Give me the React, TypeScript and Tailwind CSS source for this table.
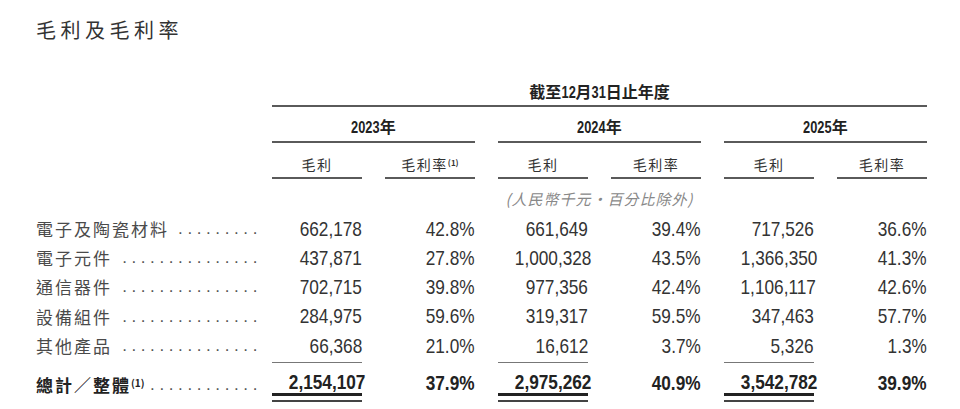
const NUM_FONT = "font-['Liberation_Sans','Noto_Sans_CJK_TC',sans-serif]"

const rows = [
  { label: '電子及陶瓷材料', dots: 9, values: ['662,178', '42.8%', '661,649', '39.4%', '717,526', '36.6%'] },
  { label: '電子元件', dots: 15, values: ['437,871', '27.8%', '1,000,328', '43.5%', '1,366,350', '41.3%'] },
  { label: '通信器件', dots: 15, values: ['702,715', '39.8%', '977,356', '42.4%', '1,106,117', '42.6%'] },
  { label: '設備組件', dots: 15, values: ['284,975', '59.6%', '319,317', '59.5%', '347,463', '57.7%'] },
  { label: '其他產品', dots: 15, values: ['66,368', '21.0%', '16,612', '3.7%', '5,326', '1.3%'] },
]

const total = ['2,154,107', '37.9%', '2,975,262', '40.9%', '3,542,782', '39.9%']

// Arial Narrow look: Liberation Sans squeezed horizontally
function Narrow({ children }: { children: React.ReactNode }) {
  return <span className="inline-block origin-right scale-x-[0.82] whitespace-nowrap">{children}</span>
}

function Dots({ count }: { count: number }) {
  return (
    <span className="whitespace-nowrap text-[17px] tracking-[4.6px] text-[#555] font-['Liberation_Sans',sans-serif]">
      {'.'.repeat(count)}
    </span>
  )
}

function Label({ children, dots, bold }: { children: React.ReactNode; dots: number; bold?: boolean }) {
  return (
    <div className="w-[236px] pr-[10px] flex items-center justify-between">
      <span
        className={`whitespace-nowrap text-[17px] tracking-[2px] font-['Noto_Sans_CJK_TC',sans-serif] ${
          bold ? 'font-bold text-[#222]' : 'text-[#4a4a4a]'
        }`}
      >
        {children}
      </span>
      <Dots count={dots} />
    </div>
  )
}

function Groups({ render }: { render: (i: number) => React.ReactNode }) {
  return (
    <div className="flex gap-[23px]">
      {[0, 1, 2].map((i) => (
        <div key={i} className="w-[203px] flex gap-[23px]">
          {render(i)}
        </div>
      ))}
    </div>
  )
}

export default function App() {
  return (
    <div className="w-[960px] h-[409px] bg-white pl-[36px] pt-[16px] overflow-hidden">
      {/* Title */}
      <h1 className="h-[28px] leading-[28px] text-[20px] tracking-[4.5px] text-[#333] font-['Noto_Sans_CJK_TC',sans-serif]">
        毛利及毛利率
      </h1>

      {/* Period header */}
      <div className="mt-[37px] ml-[236px] w-[655px] h-[26px] border-b-2 border-[#5a5a5a] text-center leading-[24px] text-[16px] font-bold text-[#222] font-['Liberation_Sans','Noto_Sans_CJK_TC',sans-serif]">
        截至
        <span className="inline-block origin-right scale-x-[0.8] -ml-[3.5px]">12</span>月
        <span className="inline-block origin-right scale-x-[0.8] -ml-[3.5px]">31</span>日止年度
      </div>

      {/* Years */}
      <div className="ml-[236px]">
        <Groups
          render={(i) => (
            <div className="w-full pt-[11px] pb-[3px] leading-[20px] text-center border-b-2 border-[#5a5a5a] text-[16px] font-bold text-[#222] font-['Liberation_Sans','Noto_Sans_CJK_TC',sans-serif]">
              <span className="inline-block origin-right scale-x-[0.8] -ml-[7px]">{2023 + i}</span>年
            </div>
          )}
        />
      </div>

      {/* Sub headers */}
      <div className="ml-[236px]">
        <Groups
          render={(i) => (
            <>
              <div className="w-[90px] pt-[11px] pb-[3px] leading-[20px] text-center border-b-2 border-[#5a5a5a] text-[14px] tracking-[1.5px] text-[#333] font-['Noto_Sans_CJK_TC',sans-serif]">
                毛利
              </div>
              <div className="w-[90px] pt-[11px] pb-[3px] leading-[20px] text-center border-b-2 border-[#5a5a5a] text-[14px] tracking-[1.5px] text-[#333] font-['Noto_Sans_CJK_TC',sans-serif]">
                毛利率
                {i === 0 && <sup className="text-[8px] tracking-normal font-bold">(1)</sup>}
              </div>
            </>
          )}
        />
      </div>

      {/* Unit note */}
      <div className="ml-[462px] w-[203px] h-[35px] pt-[10px] leading-[20px] text-center italic text-[15px] tracking-[1px] text-[#888] whitespace-nowrap font-['Noto_Sans_CJK_TC',sans-serif]">
        (人民幣千元・百分比除外)
      </div>

      {/* Data rows */}
      {rows.map((r) => (
        <div key={r.label} className="flex h-[29.25px] items-center">
          <Label dots={r.dots}>{r.label}</Label>
          <Groups
            render={(i) => (
              <>
                <div className={`w-[90px] text-right text-[21px] leading-[24px] text-[#333] ${NUM_FONT}`}>
                  <Narrow>{r.values[i * 2]}</Narrow>
                </div>
                <div className={`w-[90px] text-right text-[21px] leading-[24px] text-[#333] ${NUM_FONT}`}>
                  <Narrow>{r.values[i * 2 + 1]}</Narrow>
                </div>
              </>
            )}
          />
        </div>
      ))}

      {/* Total */}
      <div className="flex mt-[2px]">
        <div className="pt-[10px]">
          <Label bold dots={12}>
            總計／整體<sup className="text-[10px] tracking-normal">(1)</sup>
          </Label>
        </div>
        <Groups
          render={(i) => (
            <>
              <div className="w-[90px] border-t-[1.5px] border-[#777] pt-[8px]">
                <div className={`text-right text-[21px] leading-[22px] font-bold text-[#222] ${NUM_FONT}`}>
                  <Narrow>{total[i * 2]}</Narrow>
                </div>
                <div className="h-[3px] bg-[#222]" />
                <div className="mt-[4px] h-[1.5px] bg-[#444]" />
              </div>
              <div className="w-[90px] pt-[9.5px]">
                <div className={`text-right text-[21px] leading-[22px] font-bold text-[#222] ${NUM_FONT}`}>
                  <Narrow>{total[i * 2 + 1]}</Narrow>
                </div>
              </div>
            </>
          )}
        />
      </div>
    </div>
  )
}
